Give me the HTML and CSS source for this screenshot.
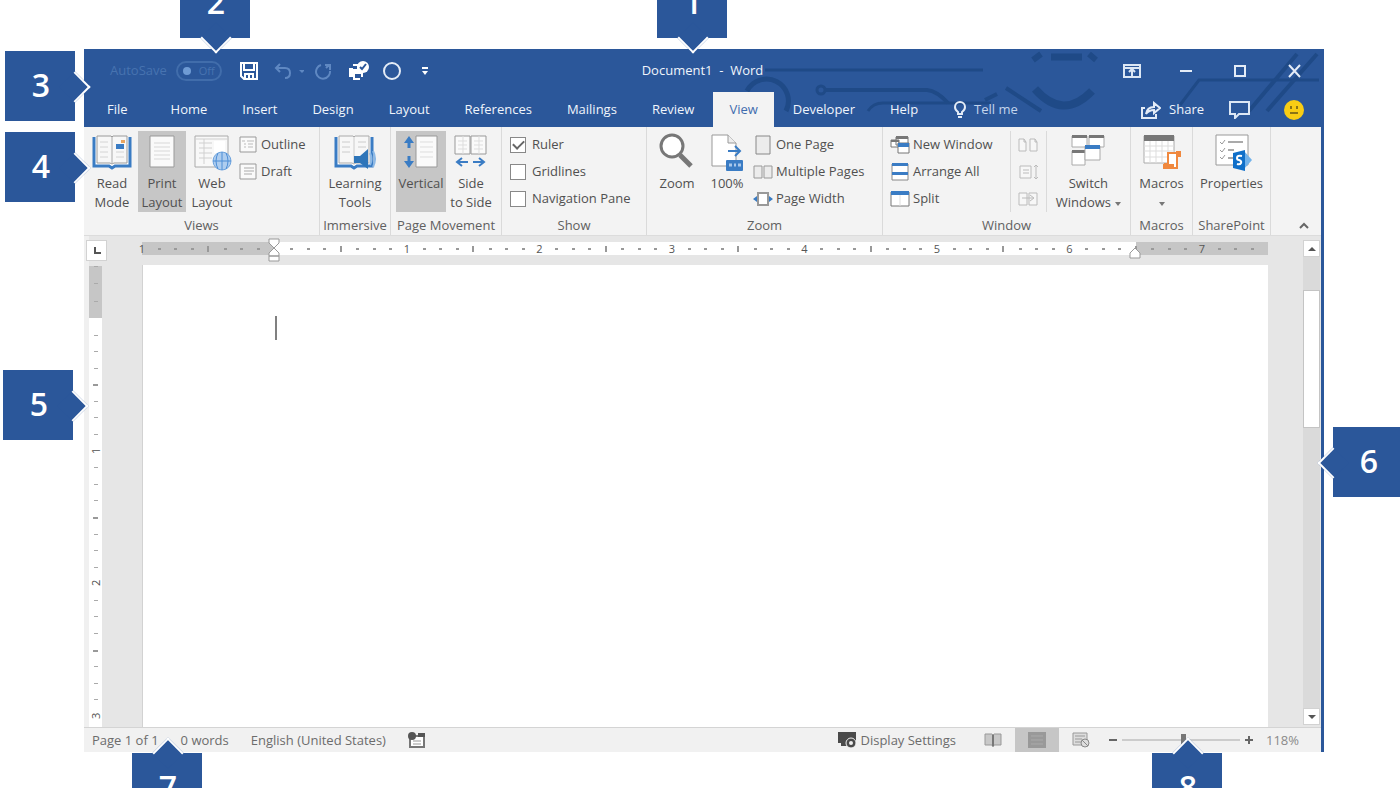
FILE: index.html
```html
<!DOCTYPE html>
<html lang="en">
<head>
<meta charset="utf-8">
<title>Document1 - Word</title>
<link rel="stylesheet" href="styles.css">
</head>
<body>
<main class="window">
  <header class="header">
    <svg class="circuit" viewBox="0 0 600 78" width="600" height="78" fill="none" stroke="#1f4a87" aria-hidden="true">
      <path d="M44 21H262" stroke-width="3"/>
      <path d="M26 42A21 21 0 1 1 65 62" stroke-width="5"/>
      <circle cx="100" cy="41" r="4" stroke-width="3"/>
      <path d="M105 41H206Q216 42 227 54" stroke-width="4"/>
      <path d="M147 62Q152 54 162 54H270" stroke-width="3"/>
      <path d="M264 51l12-6M285 39L320 62" stroke-width="4"/>
      <path d="M314 40Q342 72 371 42" stroke-width="8"/>
      <path d="M330 8H361" stroke-width="7"/>
      <path d="M312 11l8-6M368 5l7 6" stroke-width="6"/>
      <path d="M459 56L478 31H598" stroke-width="3"/>
      <path d="M528 62L576 5M546 62L596 5" stroke-width="4"/>
    </svg>
    <div class="titlebar">
      <div class="quick">
        <label class="autosave">AutoSave <button class="toggle" type="button" disabled><i></i>Off</button></label>
        <button class="qbtn save" type="button" aria-label="Save"><svg width="18" height="18" fill="none" stroke="#fff" stroke-width="2"><path d="M1 1h16v16H4l-3-3zM4 1v7h10V1M5 17v-5h8v5M9 13v4"/></svg></button>
        <button class="qbtn undo" type="button" aria-label="Undo" disabled><svg width="30" height="18" fill="none" stroke="#5f88c2" stroke-width="2"><path d="M6 2L2 6l4 4M2 6h9q5 0 5 5t-5 5"/><path d="M25 8h6l-3 3z" fill="#5f88c2" stroke="none"/></svg></button>
        <button class="qbtn redo" type="button" aria-label="Repeat" disabled><svg width="18" height="18" fill="none" stroke="#5f88c2" stroke-width="2"><path d="M11 3H16V8M15 3L12 6M7 3a7 7 0 1 0 9 6"/></svg></button>
        <button class="qbtn print" type="button" aria-label="Quick Print"><svg width="22" height="20"><path d="M1 7h4V3h7v4h3v9h-3v3H5v-3H1z" fill="#fff"/><circle cx="15" cy="6" r="6" fill="#fff"/><path d="M12 6l2 2 4-5" fill="none" stroke="#2b579a" stroke-width="2"/><path d="M7 13h6v4H7zM5 5h4v3H5z" fill="#2b579a"/></svg></button>
        <button class="qbtn circle" type="button" aria-label="Ellipse"><svg width="18" height="18"><circle cx="9" cy="9" r="8" fill="none" stroke="#e4ecf7" stroke-width="2"/></svg></button>
        <button class="qbtn more" type="button" aria-label="Customize Quick Access Toolbar"><svg width="8" height="10" fill="#fff"><path d="M1 1h6v2H1zM1 5h6L4 9z"/></svg></button>
      </div>
      <h1 class="title">Document1 &nbsp;-&nbsp; Word</h1>
      <div class="controls">
        <button type="button" aria-label="Ribbon Display Options"><svg width="18" height="14" fill="none" stroke="#dce7f5" stroke-width="2"><path d="M1 1h16v12H1zM1 4h16M9 12V6M6 8l3-3 3 3"/></svg></button>
        <button type="button" aria-label="Minimize"><svg width="14" height="14"><path d="M1 7h12" stroke="#e4ecf7" stroke-width="2"/></svg></button>
        <button type="button" aria-label="Maximize"><svg width="14" height="14"><path d="M2 2h10v10H2z" fill="none" stroke="#e4ecf7" stroke-width="2"/></svg></button>
        <button type="button" aria-label="Close"><svg width="14" height="14"><path d="M2 1l11 12M13 1L2 13" stroke="#e4ecf7" stroke-width="2"/></svg></button>
      </div>
    </div>
    <nav class="tabs">
      <button class="tab file" type="button">File</button>
      <button class="tab" type="button">Home</button>
      <button class="tab" type="button">Insert</button>
      <button class="tab" type="button">Design</button>
      <button class="tab" type="button">Layout</button>
      <button class="tab" type="button">References</button>
      <button class="tab" type="button">Mailings</button>
      <button class="tab" type="button">Review</button>
      <button class="tab active" type="button">View</button>
      <button class="tab" type="button">Developer</button>
      <button class="tab" type="button">Help</button>
      <button class="tab tell" type="button"><svg width="14" height="18" fill="none" stroke="#e4ecf7" stroke-width="2"><path d="M5 13V11Q2 9 2 6a5 5 0 0 1 10 0q0 3-3 5v2zM5 16h4"/></svg>Tell me</button>
      <div class="account">
        <button class="share" type="button"><svg width="20" height="18" fill="none" stroke="#e4ecf7" stroke-width="2"><path d="M4 7H1v10h14v-4M5 13q1-7 8-7V2l6 5-6 5V9q-5 0-8 4z"/></svg>Share</button>
        <button type="button" aria-label="Comments"><svg width="22" height="18" fill="none" stroke="#dce7f5" stroke-width="2"><path d="M1 1h19v12H10l-4 4v-4H1z"/></svg></button>
        <button type="button" aria-label="Feedback"><svg width="20" height="20"><circle cx="10" cy="10" r="10" fill="#f8cd14"/><path d="M7 6v3M13 6v3M6 13h8" fill="none" stroke="#8b7414" stroke-width="2"/></svg></button>
      </div>
    </nav>
  </header>

  <section class="ribbon" aria-label="View">
    <div class="group views">
      <div class="tools">
        <button class="big" type="button"><svg width="40" height="38"><path d="M2 4v29h15l3 2 3-2h15V4" fill="#fff" stroke="#3a7cc4" stroke-width="3"/><path d="M5 3h14l1 1 1-1h14v27H22l-2 1-2-1H5z" fill="#f7f7f7" stroke="#9a9a9a"/><path d="M20 4v26" stroke="#aaa"/><path d="M8 9h8M8 14h8M8 19h8M8 24h8M24 19h8M24 24h8" stroke="#d4d4d4"/><path d="M24 11h8v5h-8z" fill="#3a7cc4"/><path d="M29 7h4v3h-4z" fill="#e9a560"/></svg>Read<br>Mode</button>
        <button class="big on" type="button"><svg width="40" height="38"><path d="M8 3h24v31H8z" fill="#fafafa" stroke="#999"/><path d="M12 10h16M12 14h16M12 18h16M12 22h16M12 26h16" stroke="#d8d8d8"/></svg>Print<br>Layout</button>
        <button class="big" type="button"><svg width="44" height="38"><path d="M5 3h33v31H5z" fill="#f8f8f8" stroke="#aaa"/><path d="M9 10h13M9 15h13M9 20h13M9 25h13M14 6v25M5 6h33" stroke="#d0d0d0"/><path d="M24 8h11v12H24z" fill="#fff"/><circle cx="32" cy="28" r="9" fill="#aecdef" stroke="#6da3dd"/><path d="M23 28h18M32 19v18M28 20q-4 8 0 16M36 20q4 8 0 16" fill="none" stroke="#4d8ed6"/></svg>Web<br>Layout</button>
        <div class="list">
          <button class="small" type="button"><svg width="20" height="18"><path d="M2 1h16v15H2z" fill="#fafafa" stroke="#999"/><path d="M4 5h3M9 5h7M6 8h2M10 8h5M6 11h2M10 11h5" stroke="#bbb"/></svg>Outline</button>
          <button class="small" type="button"><svg width="20" height="18"><path d="M2 1h16v15H2z" fill="#fafafa" stroke="#999"/><path d="M6 5h10M6 8h10M6 11h8" stroke="#aaa"/></svg>Draft</button>
        </div>
      </div>
      <h2>Views</h2>
    </div>
    <div class="group center">
      <div class="tools">
        <button class="big" type="button"><svg width="42" height="38"><path d="M2 4v29h15l3 2 3-2h15V4" fill="#fff" stroke="#3a7cc4" stroke-width="3"/><path d="M5 3h14l1 1 1-1h14v27H22l-2 1-2-1H5z" fill="#f7f7f7" stroke="#aaa"/><path d="M20 4v26M8 9h8M8 14h8M8 19h8M24 9h8M24 14h8" stroke="#ccc"/><path d="M20 23h6l8-7v20l-8-6h-6z" fill="#2e75b9"/><path d="M36 20q3 6 0 12M39 18q4 8 0 16" fill="none" stroke="#8db9e6" stroke-width="2"/></svg>Learning<br>Tools</button>
      </div>
      <h2>Immersive</h2>
    </div>
    <div class="group center">
      <div class="tools">
        <button class="big on" type="button"><svg width="40" height="38"><path d="M15 3h21v31H15z" fill="#fafafa" stroke="#999"/><path d="M19 9h13M19 14h13M19 19h13M19 24h13" stroke="#ddd"/><path d="M8 6v9M8 23v9" stroke="#3a7cc4" stroke-width="3"/><path d="M3 10l5-7 5 7zM3 28l5 7 5-7z" fill="#3a7cc4"/></svg>Vertical<br>&nbsp;</button>
        <button class="big" type="button"><svg width="40" height="38"><path d="M4 3h15v18H4zM20 3h15v18H20z" fill="#fafafa" stroke="#999"/><path d="M7 8h9M7 12h9M7 16h9M23 8h9M23 12h9M23 16h9M12 3v18M28 3v18" stroke="#ddd"/><path d="M6 29h11M22 29h11M11 25l-5 4 5 4M28 25l5 4-5 4" fill="none" stroke="#3a7cc4" stroke-width="2"/></svg>Side<br>to Side</button>
      </div>
      <h2>Page Movement</h2>
    </div>
    <div class="group show">
      <div class="tools">
        <div class="list">
          <label class="check"><input type="checkbox" checked>Ruler</label>
          <label class="check"><input type="checkbox">Gridlines</label>
          <label class="check"><input type="checkbox">Navigation Pane</label>
        </div>
      </div>
      <h2>Show</h2>
    </div>
    <div class="group views zooms">
      <div class="tools">
        <button class="big" type="button"><svg width="40" height="38"><circle cx="15" cy="13" r="11" fill="#fff" stroke="#777" stroke-width="3"/><path d="M23 22l11 11" stroke="#777" stroke-width="5"/></svg>Zoom</button>
        <button class="big" type="button"><svg width="40" height="38"><path d="M5 2h16l8 8v23H5z" fill="#fff" stroke="#999"/><path d="M21 2v8h8" fill="#eee" stroke="#999"/><path d="M21 18h11M28 13l5 5-5 5" fill="none" stroke="#3a7cc4" stroke-width="2"/><rect x="19" y="27" width="17" height="11" rx="1" fill="#3a7cc4"/><path d="M22 32h3M27 32h2M31 32h3" stroke="#a9c8ea" stroke-width="3"/></svg>100%</button>
        <div class="list">
          <button class="small" type="button"><svg width="20" height="20"><path d="M3 1h14v18H3z" fill="#ececec" stroke="#888"/></svg>One Page</button>
          <button class="small" type="button"><svg width="20" height="18"><path d="M1 3h8v12H1zM11 3h8v12h-8z" fill="#ececec" stroke="#999"/></svg>Multiple Pages</button>
          <button class="small" type="button"><svg width="20" height="18"><path d="M5 3h10v12H5z" fill="#fff" stroke="#999" stroke-width="2"/><path d="M4 6L0 9l4 3zM16 6l4 3-4 3z" fill="#3a7cc4"/></svg>Page Width</button>
        </div>
      </div>
      <h2>Zoom</h2>
    </div>
    <div class="group win">
      <div class="tools">
        <div class="list">
          <button class="small" type="button"><svg width="20" height="20"><path d="M6 2h12v8H6zM1 5h8v7H1z" fill="#fff" stroke="#777"/><path d="M1 5h8v2H1zM6 1h12v3H6z" fill="#777"/><path d="M8 8h11v10H8z" fill="#fff" stroke="#777"/><path d="M8 8h11v4H8z" fill="#3a7cc4"/></svg>New Window</button>
          <button class="small" type="button"><svg width="20" height="20"><path d="M2 2h16v16H2z" fill="#fff" stroke="#888"/><path d="M2 1h16v3H2zM2 10h16v3H2z" fill="#3a7cc4"/></svg>Arrange All</button>
          <button class="small" type="button"><svg width="20" height="18"><path d="M1 2h18v14H1z" fill="#fff" stroke="#777"/><path d="M1 1h18v4H1z" fill="#3a7cc4"/><path d="M10 5v11" stroke="#ddd"/></svg>Split</button>
        </div>
        <div class="list pair">
          <button class="small" type="button" aria-label="View Side by Side" disabled><svg width="22" height="18" fill="#f7f7f7" stroke="#bbb"><path d="M2 3h5l2 3v9H2zM13 3h5l2 3v9h-7zM7 3v3h2M18 3v3h2"/></svg></button>
          <button class="small" type="button" aria-label="Synchronous Scrolling" disabled><svg width="22" height="18" fill="#f7f7f7" stroke="#bbb"><path d="M3 3h11v12H3zM6 7h6M6 10h6M19 2v14M17 4l2-2 2 2M17 14l2 2 2-2"/></svg></button>
          <button class="small" type="button" aria-label="Reset Window Position" disabled><svg width="22" height="18" fill="#f7f7f7" stroke="#bbb"><path d="M2 3h8v12H2zM12 3h8v12h-8zM5 8h11M13 5l4 3-4 3"/></svg></button>
        </div>
        <button class="big" type="button"><svg width="42" height="38"><path d="M5 3h15v11H5zM22 3h15v11H22z" fill="#fff" stroke="#aaa"/><path d="M5 2h15v3H5zM22 2h15v3H22z" fill="#777"/><path d="M5 18h13v14H5z" fill="#fff" stroke="#aaa"/><path d="M5 17h13v3H5z" fill="#777"/><path d="M18 13h15v14H18z" fill="#fff" stroke="#aaa"/><path d="M18 12h15v4H18z" fill="#3a7cc4"/></svg>Switch<br>Windows<span class="arrow"></span></button>
      </div>
      <h2>Window</h2>
    </div>
    <div class="group center">
      <div class="tools">
        <button class="big" type="button"><svg width="42" height="38"><path d="M3 3h30v27H3z" fill="#fff" stroke="#aaa"/><path d="M3 13h30M3 18h30M3 24h30M9 8v22M15 8v22M21 8v22M27 8v22" stroke="#ddd"/><path d="M3 2h30v6H3z" fill="#777"/><path d="M27 20h12v3h-3v12H24v-4h3z" fill="#fff" stroke="#f0883e" stroke-width="2"/><path d="M22 31h11v5H22zM35 18h5v5h-5z" fill="#f0883e"/></svg>Macros<br><span class="arrow solo"></span></button>
      </div>
      <h2>Macros</h2>
    </div>
    <div class="group center">
      <div class="tools">
        <button class="big" type="button"><svg width="42" height="38"><path d="M5 2h32v30H5z" fill="#fff" stroke="#999"/><path d="M9 9l2 2 3-4M9 17l2 2 3-4M9 24l2 2 3-4" fill="none" stroke="#999"/><path d="M17 9h15M17 17h6M17 25h5" stroke="#aaa" stroke-width="2"/><path d="M33 18l8 9-8 9z" fill="#72b2ea"/><path d="M22 20l12-3v21l-12-3z" fill="#0f6fc9"/><path d="M31 23q-5-1-5 2 0 2 2 2 3 1 2 3-1 2-4 1" fill="none" stroke="#fff" stroke-width="2"/></svg>Properties</button>
      </div>
      <h2>SharePoint</h2>
    </div>
    <button class="collapse" type="button" aria-label="Collapse the Ribbon"><svg width="12" height="8"><path d="M2 7l4-4 4 4" fill="none" stroke="#666" stroke-width="2"/></svg></button>
  </section>

  <section class="workspace">
    <div class="left">
      <button class="corner" type="button" aria-label="Tab selector"><svg width="8" height="8"><path d="M2 0v6h6" fill="none" stroke="#555" stroke-width="2"/></svg></button>
      <div class="vruler"><div class="vmargin"></div><div class="vbody"></div></div>
    </div>
    <div class="sheet">
      <div class="hruler">
        <div class="hbody"></div>
        <svg class="indent first" width="14" height="24" fill="#fff" stroke="#999"><path d="M2 1h10v4l-5 5-5-5zM7 10l5 5v3H2v-3zM2 18h10v5H2z"/></svg>
        <svg class="indent last" width="12" height="12" fill="#fff" stroke="#999"><path d="M6 1l5 5v5H1V6z"/></svg>
      </div>
      <div class="page" role="textbox" aria-label="Document"><span class="caret"></span></div>
    </div>
    <div class="scroll">
      <button type="button" aria-label="Scroll up"><svg width="8" height="6"><path d="M0 5l4-4 4 4z" fill="#555"/></svg></button>
      <div class="track"><div class="thumb"></div></div>
      <button type="button" aria-label="Scroll down"><svg width="8" height="6"><path d="M0 1h8L4 5z" fill="#555"/></svg></button>
    </div>
  </section>

  <footer class="status">
    <span>Page 1 of 1</span>
    <span>0 words</span>
    <span>English (United States)</span>
    <button type="button" aria-label="Record macro"><svg width="18" height="16"><path d="M2 4h14v11H2z" fill="#fff" stroke="#777" stroke-width="2"/><path d="M10 1h7v4h-7z" fill="#555"/><circle cx="4" cy="4" r="4" fill="#555"/><path d="M5 9h8M5 12h8" stroke="#999"/></svg></button>
    <div class="right">
      <button class="display" type="button"><svg width="20" height="18"><path d="M1 1h18v11H1zM4 12h8v3H4z" fill="#4a4a4a"/><circle cx="14" cy="12" r="5" fill="#4a4a4a" stroke="#f1f1f1"/><circle cx="14" cy="12" r="2" fill="#eee"/></svg>Display Settings</button>
      <button class="mode" type="button" aria-label="Read Mode"><svg width="18" height="16"><path d="M1 2h7l1 1 1-1h7v11h-7l-1 2-1-2H1z" fill="#c8c8c8" stroke="#999"/><path d="M9 3v11" stroke="#777" stroke-width="2"/></svg></button>
      <button class="mode on" type="button" aria-label="Print Layout"><svg width="18" height="16"><path d="M0 0h18v16H0z" fill="#999"/><path d="M3 4h12M3 8h12M3 12h12" stroke="#aaa"/></svg></button>
      <button class="mode" type="button" aria-label="Web Layout"><svg width="18" height="16"><path d="M1 1h14v12H1z" fill="#ddd" stroke="#999"/><path d="M3 4h10M3 7h7M3 10h6" stroke="#999"/><circle cx="13" cy="11" r="4" fill="#ddd" stroke="#888"/><path d="M10 8l6 6" stroke="#888"/></svg></button>
      <button class="step" type="button" aria-label="Zoom out"><svg width="10" height="10"><path d="M1 5h8" stroke="#666" stroke-width="2"/></svg></button>
      <input class="zoom" type="range" min="10" max="190" value="104" aria-label="Zoom">
      <button class="step" type="button" aria-label="Zoom in"><svg width="10" height="10"><path d="M1 5h8M5 1v8" stroke="#666" stroke-width="2"/></svg></button>
      <button class="percent" type="button">118%</button>
    </div>
  </footer>
</main>

<div class="callout down c1">1</div>
<div class="callout down c2">2</div>
<div class="callout toright c3">3</div>
<div class="callout toright c4">4</div>
<div class="callout toright c5">5</div>
<div class="callout toleft c6">6</div>
<div class="callout up c7">7</div>
<div class="callout up c8">8</div>
<script src="ruler.js"></script>
</body>
</html>
```
FILE: ruler.js
```js
// Builds ruler marks: a number each inch, a long tick each half inch, dots at each eighth.
function addMarks(parent, from, to, labelAt) {
  for (let k = from; k < to; k++) {
    const cell = document.createElement('span');
    const mark = document.createElement('i');
    if (k % 8 === 0) {
      mark.className = 'num';
      mark.textContent = labelAt(k / 8);
    } else {
      mark.className = k % 4 === 0 ? 'half' : 'dot';
    }
    cell.appendChild(mark);
    parent.appendChild(cell);
  }
}
const label = n => (n === 0 ? '' : String(Math.abs(n)));
addMarks(document.querySelector('.hbody'), -8, 60, label);
addMarks(document.querySelector('.vmargin'), -3, 0, label);
addMarks(document.querySelector('.vbody'), 0, 25, label);
```
FILE: styles.css
```css
* { box-sizing: border-box; }
body {
  margin: 0;
  height: 100vh;
  position: relative;
  overflow: hidden;
  background: #fff;
  font: 13px/19px "Open Sans", "Noto Sans", sans-serif;
  color: #505050;
  display: flex;
  padding: 49px 76px 36px 84px;
}
button {
  font: inherit;
  color: inherit;
  background: none;
  border: 0;
  padding: 0;
  margin: 0;
}
svg { display: block; flex: none; }
h1, h2 { margin: 0; font: inherit; }

.window {
  flex: 1;
  min-width: 0;
  display: flex;
  flex-direction: column;
  border-right: 3px solid #2b579a;
  background: #e6e6e6;
}

/* Title bar and tabs */
.header {
  position: relative;
  background: #2b579a;
  color: #f0f5fc;
}
.circuit { position: absolute; right: 0; top: 0; }
.titlebar {
  position: relative;
  display: grid;
  grid-template-columns: 1fr auto 1fr;
  align-items: center;
  height: 43px;
}
.quick { display: flex; align-items: center; padding-left: 26px; }
.autosave { display: flex; align-items: center; gap: 9px; color: #4773b0; }
.toggle {
  display: flex;
  align-items: center;
  gap: 8px;
  width: 46px;
  height: 20px;
  padding-left: 5px;
  border: 2px solid #416dab;
  border-radius: 10px;
  font-size: 11px;
}
.toggle i { width: 8px; height: 8px; border-radius: 4px; background: #6f9bd4; }
.save { margin-left: 18px; }
.undo { margin-left: 16px; }
.redo { margin-left: 10px; }
.print { margin-left: 16px; }
.circle { margin-left: 13px; }
.more { margin-left: 20px; }
.controls { display: flex; justify-content: flex-end; }
.controls button {
  width: 54px;
  height: 38px;
  display: flex;
  align-items: center;
  justify-content: center;
}
.tabs { position: relative; display: flex; gap: 3px; height: 35px; padding-left: 7px; }
.tab { padding: 0 16px; white-space: nowrap; }
.file { margin-right: 8px; }
.active { background: #f3f3f3; color: #3f6cae; }
.tell { display: flex; align-items: center; gap: 7px; color: #c3d4ec; }
.account { margin-left: auto; display: flex; align-items: center; gap: 25px; padding-right: 17px; }
.account button { display: flex; align-items: center; gap: 8px; }
.account button + button + button { margin-left: 8px; }

/* Ribbon */
.ribbon {
  display: grid;
  grid-template-columns: 236fr 71fr 111fr 145fr 236fr 248fr 62fr 78fr 50fr;
  background: #f3f3f3;
  border-bottom: 1px solid #dcdcdc;
}
.group {
  min-width: 0;
  padding-top: 4px;
  border-right: 1px solid #dadada;
  display: flex;
  flex-direction: column;
}
.group h2 { padding-top: 3px; text-align: center; color: #606060; white-space: nowrap; line-height: 20px; }
.tools { display: flex; height: 81px; }
.views .tools { padding-left: 4px; gap: 2px; }
.zooms .tools { padding-left: 6px; }
.center .tools { justify-content: center; }
.center .big { min-width: 50px; }
.big {
  display: block;
  min-width: 48px;
  height: 81px;
  padding-top: 2px;
  text-align: center;
  white-space: nowrap;
}
.big svg { margin: 0 auto 3px; }
.on { background: #c6c6c6; }
.big:not(:has(br)) { padding-bottom: 19px; }
.arrow {
  display: inline-block;
  vertical-align: middle;
  margin-left: 4px;
  border: 3px solid transparent;
  border-top: 4px solid #777;
  border-bottom: 0;
}
.solo { margin-left: 0; }
.list { display: flex; flex-direction: column; }
.small, .check { display: flex; align-items: center; gap: 3px; height: 27px; white-space: nowrap; }
.show .list { padding-left: 8px; }
.check { gap: 6px; }
.check input {
  appearance: none;
  display: grid;
  place-items: center;
  width: 16px;
  height: 16px;
  margin: 0;
  border: 1px solid #888;
  background: #fff;
}
.check input:checked::before {
  content: "";
  width: 9px;
  height: 5px;
  margin-bottom: 3px;
  border-left: 2px solid #666;
  border-bottom: 2px solid #666;
  transform: rotate(-45deg);
}
.win .tools { padding: 0 9px 0 7px; justify-content: space-between; }
.win .list:first-child { margin-right: 8px; }
.pair { padding: 0 7px 0 6px; border: solid #dadada; border-width: 0 1px; }
.collapse { align-self: end; justify-self: end; padding: 0 11px 6px 0; }

/* Workspace */
.workspace { flex: 1; min-height: 0; display: flex; }
.left { width: 58px; display: flex; flex-direction: column; background: linear-gradient(to right, #f0f0f0 5px, #e6e6e6 5px); }
.corner {
  width: 21px;
  height: 21px;
  margin: 4px 0 5px 2px;
  display: grid;
  place-items: center;
  background: #fff;
  border: 1px solid #d2d2d2;
}
.vruler { flex: 1; width: 13px; margin-left: 5px; display: flex; flex-direction: column; background: #fff; overflow: hidden; }
.vmargin { height: 52px; background: #c6c6c6; display: flex; flex-direction: column; }
.vbody { flex: 1; display: flex; flex-direction: column; padding-bottom: 11px; }
.vruler span { flex: 1; min-height: 0; display: flex; justify-content: center; }
.vbody span:last-child { flex: 0 0 0; }
.vruler i { flex: none; background: #aaa; }
.vruler .dot { width: 4px; height: 1px; }
.vruler .half { width: 5px; height: 2px; background: #999; }
.vruler .num {
  background: none;
  font: 11px/12px "Open Sans", sans-serif;
  writing-mode: vertical-rl;
  transform: rotate(180deg);
  height: 12px;
  margin-top: -6px;
  text-align: center;
}
.sheet { flex: 1; min-width: 0; display: flex; flex-direction: column; }
.hruler { position: relative; height: 13px; margin: 6px 0 10px; }
.hbody {
  height: 13px;
  display: flex;
  background: linear-gradient(to right, #c6c6c6 11.76%, #fff 11.76% 88.24%, #c6c6c6 88.24%);
}
.hbody span { flex: 1 1 0; width: 0; display: flex; align-items: center; }
.hbody i { flex: none; background: #999; }
.hbody .dot { width: 3px; height: 2px; margin-left: -1px; }
.hbody .half { width: 2px; height: 6px; margin-left: -1px; }
.hbody .num { width: 12px; margin-left: -6px; background: none; font: 11px/13px "Open Sans", sans-serif; text-align: center; color: #555; }
.indent { position: absolute; top: -4px; margin-left: -7px; }
.first { left: 11.76%; }
.last { left: 88.24%; top: 5px; }
.page { flex: 1; background: #fff; border-left: 1px solid #d2d2d2; padding: 51px 0 0 132px; }
.caret { display: block; width: 2px; height: 24px; background: #808080; }
.scroll { width: 18px; margin-left: 35px; display: flex; flex-direction: column; padding: 4px 1px 2px 0; }
.scroll button { height: 17px; display: grid; place-items: center; background: #fff; border: 1px solid #d2d2d2; }
.track { flex: 1; background: #dadada; padding-top: 33px; }
.thumb { height: 33%; background: #fff; border: 1px solid #c4c4c4; }

/* Status bar */
.status {
  height: 25px;
  display: flex;
  align-items: center;
  gap: 22px;
  padding-left: 8px;
  background: #f1f1f1;
  border-top: 1px solid #d4d4d4;
  color: #6c6c6c;
  white-space: nowrap;
}
.right { margin-left: auto; display: flex; align-items: center; height: 100%; padding-right: 22px; }
.display { display: flex; align-items: center; gap: 3px; margin-right: 15px; }
.mode { width: 44px; height: 24px; display: grid; place-items: center; }
.step { margin: 0 4px; }
.mode + .step { margin-left: 5px; }
.zoom { appearance: none; width: 118px; height: 16px; margin: 0; background: linear-gradient(#ccc, #ccc) center / 100% 2px no-repeat; }
.zoom::-webkit-slider-thumb { appearance: none; width: 5px; height: 12px; background: #777; }
.percent { margin-left: 8px; color: #8a8a8a; }

/* Numbered callouts laid over the window */
.callout {
  position: absolute;
  width: 70px;
  height: 70px;
  padding: 0 0 3px 2px;
  background: #2b579a;
  color: #fff;
  font-size: 32px;
  line-height: 40px;
  font-weight: 600;
  display: grid;
  place-items: center;
  isolation: isolate;
}
.callout::before {
  content: "";
  position: absolute;
  z-index: -1;
  width: 20px;
  height: 20px;
  background: #2b579a;
  border: solid #fff;
  border-width: 0 2px 2px 0;
}
.down::before { left: 25px; bottom: -11px; transform: rotate(45deg); }
.toright::before { top: 25px; right: -11px; transform: rotate(-45deg); }
.toleft::before { top: 25px; left: -11px; transform: rotate(135deg); }
.up::before { left: 25px; top: -11px; transform: rotate(225deg); }
.c1 { left: 657px; top: -32px; }
.c2 { left: 180px; top: -32px; }
.c3 { left: 5px; top: 51px; }
.c4 { left: 5px; top: 132px; }
.c5 { left: 3px; top: 370px; }
.c6 { right: -3px; top: 427px; }
.c7 { left: 132px; bottom: -35px; }
.c8 { right: 178px; bottom: -35px; }
```
